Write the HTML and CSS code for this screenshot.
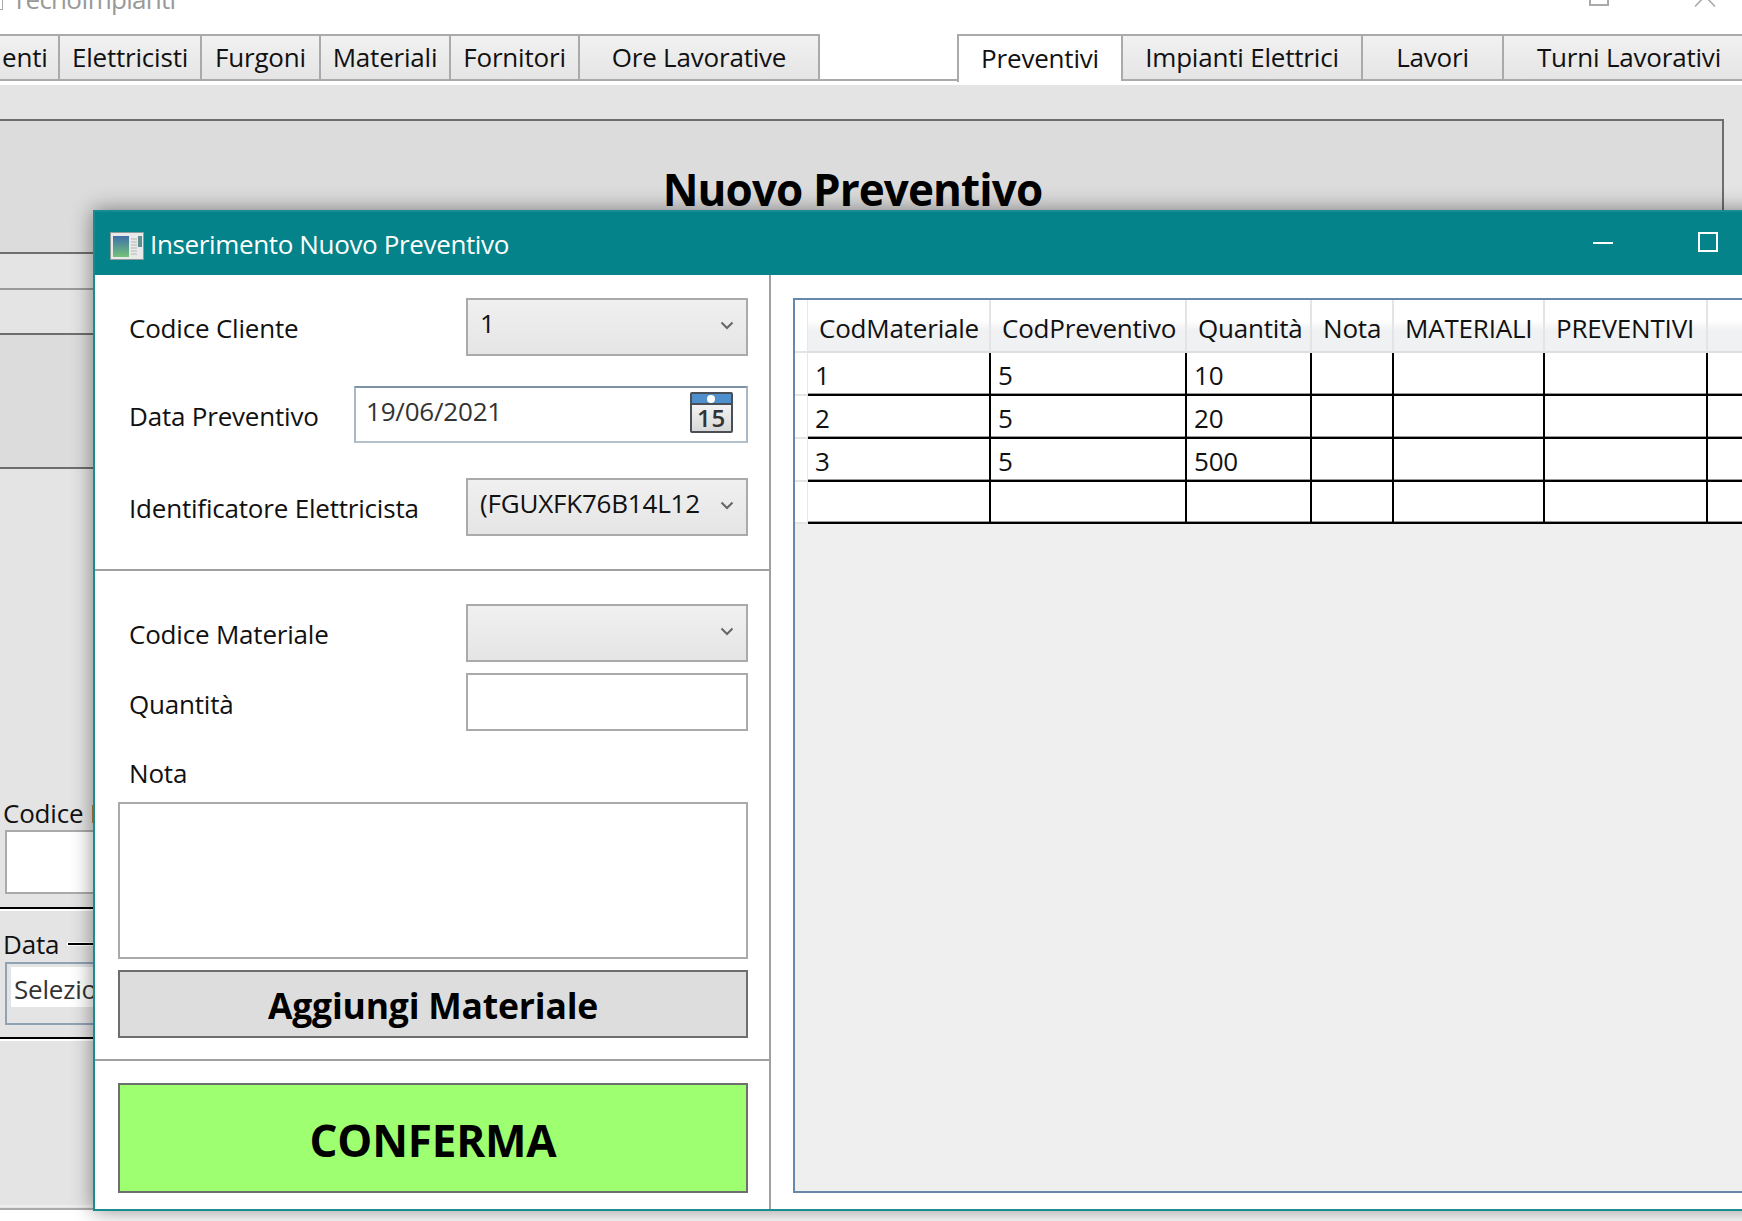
FILE: index.html
```html
<!DOCTYPE html>
<html lang="it">
<head>
<meta charset="utf-8">
<title>TecnoImpianti</title>
<link rel="stylesheet" href="styles.css">
</head>
<body>
<div class="app">
  <header class="appbar">
    <span class="app-icon"></span>
    <span class="app-title">TecnoImpianti</span>
    <span class="app-controls">
      <span class="ctl-max"></span>
      <svg class="ctl-close" width="20" height="7" viewBox="0 0 20 7"><path d="M10 -4 L0 6.5 M10 -4 L20 6.5" stroke="#aaa" stroke-width="1.6" fill="none"/></svg>
    </span>
  </header>
  <nav class="tabs">
    <div class="tab t-clienti">enti</div>
    <div class="tab t-elet">Elettricisti</div>
    <div class="tab t-furg">Furgoni</div>
    <div class="tab t-mate">Materiali</div>
    <div class="tab t-forn">Fornitori</div>
    <div class="tab t-ore">Ore Lavorative</div>
    <div class="tab t-prev active">Preventivi</div>
    <div class="tab t-impi">Impianti Elettrici</div>
    <div class="tab t-lavo">Lavori</div>
    <div class="tab t-turn">Turni Lavorativi</div>
  </nav>
  <main class="content">
    <section class="hero"><h1>Nuovo Preventivo</h1></section>
    <div class="strip strip-a"></div>
    <div class="strip strip-b"></div>
    <div class="band"></div>
    <div class="lower">
      <label class="bg-label">Codice Preventivo</label>
      <div class="bg-input"></div>
      <div class="rule"></div>
      <div class="bg-data-row"><label class="bg-label">Data</label><span class="dash"></span></div>
      <div class="bg-date"><span class="bg-date-text">Seleziona data</span></div>
      <div class="rule rule-second"></div>
    </div>
    <div class="foot-line"></div>
  </main>
</div>

<section class="dialog">
  <header class="dlg-title">
    <svg class="dlg-icon" width="34" height="28" viewBox="0 0 34 28">
      <defs><linearGradient id="ig" x1="0" y1="0" x2="0" y2="1"><stop offset="0" stop-color="#3f70a8"/><stop offset="1" stop-color="#74c27a"/></linearGradient></defs>
      <rect x="0.5" y="0.5" width="33" height="27" fill="#e9e9e9" stroke="#8c9a9c"/>
      <rect x="3" y="4" width="16" height="21" fill="url(#ig)"/>
      <path d="M21 7h6M21 10h6M21 13h6M21 16h6M21 19h6M21 22h6" stroke="#b5b5b5" stroke-width="1"/>
      <rect x="28" y="4" width="4" height="11" fill="#5b8f90"/>
    </svg>
    <span class="dlg-text">Inserimento Nuovo Preventivo</span>
    <span class="dlg-min"></span>
    <span class="dlg-max"></span>
  </header>
  <div class="dlg-body">
    <div class="form">
      <div class="sec sec-a">
        <div class="row row-a">
          <label>Codice Cliente</label>
          <div class="combo"><span>1</span><svg class="chev" width="14" height="9" viewBox="0 0 14 9"><path d="M1.5 1.5 L7 7 L12.5 1.5" stroke="#666" stroke-width="2" fill="none"/></svg></div>
        </div>
        <div class="row row-b">
          <label>Data Preventivo</label>
          <div class="date">
            <span>19/06/2021</span>
            <div class="cal"><div class="cal-top"><i></i></div><div class="cal-num">15</div></div>
          </div>
        </div>
        <div class="row row-c">
          <label>Identificatore Elettricista</label>
          <div class="combo"><span>(FGUXFK76B14L12</span><svg class="chev" width="14" height="9" viewBox="0 0 14 9"><path d="M1.5 1.5 L7 7 L12.5 1.5" stroke="#666" stroke-width="2" fill="none"/></svg></div>
        </div>
      </div>
      <div class="sec sec-b">
        <div class="row">
          <label>Codice Materiale</label>
          <div class="combo"><span></span><svg class="chev" width="14" height="9" viewBox="0 0 14 9"><path d="M1.5 1.5 L7 7 L12.5 1.5" stroke="#666" stroke-width="2" fill="none"/></svg></div>
        </div>
        <div class="row row-q">
          <label>Quantità</label>
          <div class="input"></div>
        </div>
        <label class="nota-label">Nota</label>
        <div class="textarea"></div>
        <button class="btn-add" type="button">Aggiungi Materiale</button>
      </div>
      <div class="sec sec-c">
        <button class="btn-ok" type="button">CONFERMA</button>
      </div>
    </div>
    <div class="side">
      <div class="grid">
        <div class="g-row g-head">
          <div class="g-rh"></div>
          <div class="g-h">CodMateriale</div>
          <div class="g-h">CodPreventivo</div>
          <div class="g-h">Quantità</div>
          <div class="g-h">Nota</div>
          <div class="g-h">MATERIALI</div>
          <div class="g-h">PREVENTIVI</div>
          <div class="g-h"></div>
        </div>
        <div class="g-row g-r1"><div class="g-rh"></div><div class="g-c">1</div><div class="g-c">5</div><div class="g-c">10</div><div class="g-c"></div><div class="g-c"></div><div class="g-c"></div><div class="g-c"></div></div>
        <div class="g-row g-r2"><div class="g-rh"></div><div class="g-c">2</div><div class="g-c">5</div><div class="g-c">20</div><div class="g-c"></div><div class="g-c"></div><div class="g-c"></div><div class="g-c"></div></div>
        <div class="g-row g-r2"><div class="g-rh"></div><div class="g-c">3</div><div class="g-c">5</div><div class="g-c">500</div><div class="g-c"></div><div class="g-c"></div><div class="g-c"></div><div class="g-c"></div></div>
        <div class="g-row g-r3"><div class="g-rh"></div><div class="g-c"></div><div class="g-c"></div><div class="g-c"></div><div class="g-c"></div><div class="g-c"></div><div class="g-c"></div><div class="g-c"></div></div>
      </div>
    </div>
  </div>
</section>
</body>
</html>
```
FILE: styles.css
```css
* { box-sizing: border-box; }
html, body { margin: 0; height: 100%; }
body {
  width: 1742px; height: 1221px; overflow: hidden; position: relative; background: #fff;
  font-family: "Open Sans", "Noto Sans", sans-serif; font-size: 26px; color: #111; letter-spacing: -0.2px;
}
label { display: block; }

/* Main window */
.appbar { height: 34px; display: flex; align-items: flex-end; overflow: hidden; }
.app-icon { flex: none; align-self: flex-start; width: 3px; height: 10px; border: 1px solid #aaa; border-left: 0; border-top: 0; }
.app-title { color: #999; line-height: 34px; margin: 0 0 18px 9px; flex: none; letter-spacing: -0.75px; }
.app-controls { display: flex; align-items: flex-start; align-self: flex-start; gap: 86px; margin: 0 27px 0 auto; }
.ctl-max { display: block; width: 20px; height: 6px; border: 2px solid #aaa; border-top: 0; }
.ctl-close { display: block; overflow: visible; }

.tabs { display: flex; height: 47px; border-bottom: 2px solid #aaa; }
.tab {
  flex: none; height: 47px; display: flex; align-items: center; justify-content: center; padding-bottom: 2px;
  border: 2px solid #aaa; border-right: 0; background: linear-gradient(#f1f1f1, #e5e5e5);
}
.t-clienti { width: 58px; border-left: 0; justify-content: flex-start; padding-left: 2px; }
.t-elet { width: 142px; }
.t-furg { width: 119px; }
.t-mate { width: 130px; }
.t-forn { width: 129px; }
.t-ore { width: 242px; border-right: 2px solid #aaa; }
.t-prev { width: 164px; margin-left: 137px; }
.t-impi { width: 240px; }
.t-lavo { width: 141px; }
.t-turn { width: 252px; }
.tab.active { background: #fff; height: 48px; border-bottom: 0; position: relative; z-index: 1; }

.content { background: #e4e4e4; margin-top: 4px; padding-top: 34px; height: 1124px; box-shadow: 0 -4px 0 #fff; position: relative; }
.hero {
  height: 135px; margin: 0 18px 0 -2px; background: #dcdcdc; border: 2px solid #6e6e6e;
  display: flex; justify-content: center; padding: 36px 17px 0 0;
}
.hero h1 { margin: 0; font-size: 44px; line-height: 64px; font-weight: 700; color: #000; letter-spacing: -0.9px; }
.strip { background: #e4e4e4; }
.strip-a { height: 36px; border-bottom: 2px solid #9a9a9a; }
.strip-b { height: 45px; border-bottom: 2px solid #6e6e6e; }
.band { height: 134px; background: #dcdcdc; border-bottom: 2px solid #6e6e6e; }

.lower { padding-top: 329px; }
.bg-label { line-height: 30px; padding-left: 3px; margin-bottom: 2px; white-space: nowrap; }
.bg-input { width: 110px; height: 64px; margin-left: 5px; background: #fff; border: 2px solid #aaa; }
.rule { height: 4px; margin-top: 13px; border-top: 2px solid #000; border-bottom: 2px solid #fff; }
.bg-data-row { display: flex; align-items: center; margin-top: 18px; }
.bg-data-row .bg-label { margin: 0; }
.dash { width: 40px; height: 2px; background: #000; margin-left: 9px; box-shadow: 0 0 0 1px #fff; }
.bg-date { width: 110px; height: 63px; margin: 3px 0 0 5px; border: 2px solid #8fa3b5; padding: 3px 0 0 4px; overflow: hidden; }
.bg-date-text { display: block; width: 300px; height: 40px; background: #fff; padding-left: 3px; line-height: 44px; color: #333; white-space: nowrap; overflow: hidden; }
.rule-second { margin-top: 12px; }
.foot-line { position: absolute; left: 0; right: 0; top: 1123px; height: 2px; background: #aaa; box-shadow: 0 -3px 0 #ededed; }

/* Dialog */
.dialog {
  position: absolute; left: 93px; top: 210px; width: 1700px; height: 1001px;
  background: #fff; border: 2px solid #1a8b91; border-top: 0; box-shadow: 0 0 20px rgba(0, 0, 0, .45);
  display: flex; flex-direction: column;
}
.dlg-title { height: 65px; flex: none; background: #04838a; border-top: 2px solid #1a8b91; display: flex; align-items: center; color: #fff; position: relative; }
.dlg-icon { flex: none; margin: 4px 0 0 15px; }
.dlg-text { margin: 1px 0 0 6px; white-space: nowrap; letter-spacing: -0.36px; }
.dlg-min { position: absolute; left: 1498px; top: 30px; width: 20px; height: 2px; background: #fff; }
.dlg-max { position: absolute; left: 1603px; top: 20px; width: 20px; height: 20px; border: 2px solid #fff; }

.dlg-body { flex: 1; display: flex; min-height: 0; }
.form { width: 676px; flex: none; border-right: 2px solid #a0a0a0; display: flex; flex-direction: column; }
.sec { padding: 0 21px 0 23px; }
.sec-a { height: 296px; padding-top: 23px; border-bottom: 2px solid #a0a0a0; }
.sec-b { height: 490px; padding-top: 33px; border-bottom: 2px solid #a0a0a0; }
.sec-c { flex: 1; padding-top: 22px; }
.row { display: flex; justify-content: space-between; align-items: center; padding-left: 11px; }
.row label { margin-top: 2px; white-space: nowrap; }
.row-b { margin-top: 30px; }
.row-c { margin-top: 35px; }
.row-q { margin-top: 11px; }
.row-q label { margin-top: 4px; }
.combo {
  width: 282px; height: 58px; flex: none; border: 2px solid #aaa; background: linear-gradient(#f0f0f0, #e5e5e5);
  display: flex; justify-content: space-between; align-items: center; padding: 0 12px 9px 12px;
}
.combo span { white-space: nowrap; }
.chev { flex: none; margin-top: 5px; }
.date {
  width: 394px; height: 57px; flex: none; border: 2px solid; border-color: #7f93a6 #a9b8c6 #b3c1cd #a9b8c6; background: #fff;
  display: flex; justify-content: space-between; align-items: center; padding: 0 13px 0 10px; color: #333;
}
.date > span { margin-bottom: 7px; }
.cal { width: 43px; height: 41px; border: 2px solid #4a4f55; border-radius: 2px; background: linear-gradient(#fff, #d8d8d8); margin: 0 0 5px 0; display: flex; flex-direction: column; }
.cal-top { height: 11px; background: #4f8fcc; border-bottom: 2px solid #4a4f55; position: relative; flex: none; }
.cal-top i { position: absolute; left: 15px; top: 1px; width: 8px; height: 8px; border-radius: 50%; background: #fff; }
.cal-num { font-size: 24px; line-height: 26px; text-align: center; color: #333; letter-spacing: .8px; font-weight: 600; }
.input { width: 282px; height: 58px; flex: none; border: 2px solid #aaa; background: #fff; }
.nota-label { padding-left: 11px; margin-top: 25px; line-height: 34px; }
.textarea { height: 157px; margin-top: 12px; border: 2px solid #aaa; background: #fff; }
.btn-add, .btn-ok { display: block; width: 100%; font-family: inherit; color: #000; font-weight: 700; padding: 0; border: 2px solid #6e6e6e; }
.btn-add { height: 68px; margin-top: 11px; background: #dddddd; font-size: 35.5px; letter-spacing: -0.2px; padding-top: 2px; }
.btn-ok { height: 110px; background: #9eff70; font-size: 44px; letter-spacing: -0.2px; padding-top: 4px; }

.side { flex: 1; padding: 23px 0 16px 22px; min-width: 0; }
.grid { height: 100%; border: 2px solid #6688aa; background: #efefef; }
.g-row { display: grid; grid-template-columns: 13px 183px 196px 125px 82px 151px 163px 1fr; }
.g-head { height: 53px; }
.g-h {
  background: linear-gradient(#fff 40%, #f0f1f3 60%); border-right: 2px solid #e4e4e6; border-bottom: 2px solid #dedede;
  padding: 4px 0 0 11px; display: flex; align-items: center; white-space: nowrap;
}
.g-rh { background: #fff; border-bottom: 2px solid #e4e4e4; border-right: 1px solid #e8e8e8; }
.g-c {
  background: #fff; border-right: 2px solid #000; border-bottom: 2px solid #000;
  box-shadow: inset 0 -1px 0 #999; padding: 4px 0 0 7px; line-height: 36px;
}
.g-r1 { height: 43px; }
.g-r2 { height: 43px; }
.g-r3 { height: 42px; }
```
